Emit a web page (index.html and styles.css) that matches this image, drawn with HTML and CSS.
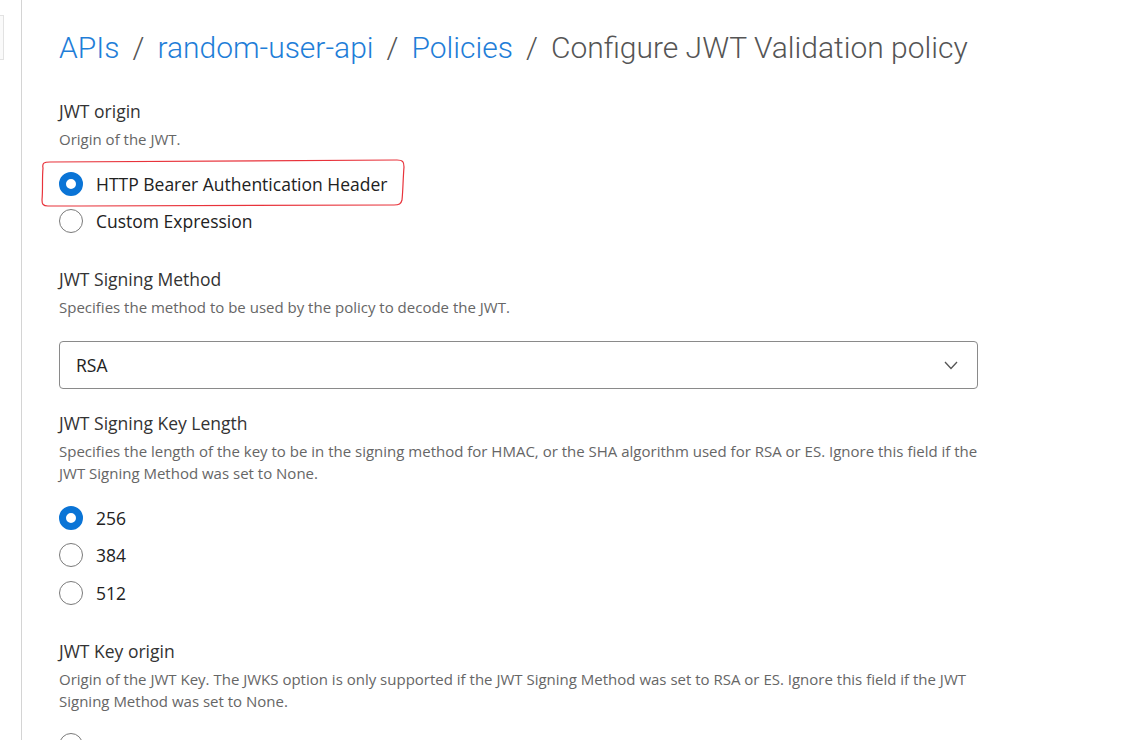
FILE: index.html
```html
<!DOCTYPE html>
<html>
<head>
<meta charset="utf-8">
<link rel="stylesheet" href="styles.css">
</head>
<body>
<div class="page">
  <aside class="sidebar"><div class="side-tab"></div></aside>
  <main class="content">
    <h1 class="crumbs">
      <a class="crumb">APIs</a><span class="sep">/</span><a class="crumb">random-user-api</a><span class="sep">/</span><a class="crumb">Policies</a><span class="sep">/</span><span class="current">Configure JWT Validation policy</span>
    </h1>

    <section class="field first-field">
      <div class="label">JWT origin</div>
      <div class="desc">Origin of the JWT.</div>
      <div class="radios">
        <div class="radio-row">
          <span class="radio checked"></span><span class="radio-text">HTTP Bearer Authentication Header</span>
          <svg class="annotation" width="368" height="50" viewBox="0 0 368 50">
            <path d="M3 9 C 2 4, 4 3, 10 3 L 357 1 C 363 1, 364 3, 364 8 C 363 20, 363 32, 362 41 C 361 45, 359 46, 354 46 L 40 47 L 8 47 C 3 47, 2 45, 2 41 C 3 30, 2 20, 3 9 Z" fill="none" stroke="#e8333b" stroke-width="1.2"/>
          </svg>
        </div>
        <div class="radio-row">
          <span class="radio"></span><span class="radio-text">Custom Expression</span>
        </div>
      </div>
    </section>

    <section class="field">
      <div class="label">JWT Signing Method</div>
      <div class="desc">Specifies the method to be used by the policy to decode the JWT.</div>
      <div class="select">
        <span class="select-value">RSA</span>
        <svg class="chevron" width="14" height="9" viewBox="0 0 14 9"><path d="M1 1 L7 7.5 L13 1" fill="none" stroke="#555" stroke-width="1.3"/></svg>
      </div>
    </section>

    <section class="field after-select">
      <div class="label">JWT Signing Key Length</div>
      <div class="desc">Specifies the length of the key to be in the signing method for HMAC, or the SHA algorithm used for RSA or ES. Ignore this field if the JWT Signing Method was set to None.</div>
      <div class="radios">
        <div class="radio-row"><span class="radio checked"></span><span class="radio-text">256</span></div>
        <div class="radio-row"><span class="radio"></span><span class="radio-text">384</span></div>
        <div class="radio-row"><span class="radio"></span><span class="radio-text">512</span></div>
      </div>
    </section>

    <section class="field">
      <div class="label">JWT Key origin</div>
      <div class="desc">Origin of the JWT Key. The JWKS option is only supported if the JWT Signing Method was set to RSA or ES. Ignore this field if the JWT Signing Method was set to None.</div>
      <div class="radios">
        <div class="radio-row"><span class="radio"></span></div>
      </div>
    </section>
  </main>
</div>
</body>
</html>
```

FILE: styles.css
```css
html, body {
  margin: 0;
  padding: 0;
  background: #ffffff;
  height: 100%;
  overflow: hidden;
}
body {
  font-family: "Open Sans", "Liberation Sans", sans-serif;
  color: #333;
}
.page {
  display: flex;
  min-height: 740px;
}
.sidebar {
  width: 21px;
  border-right: 1px solid #d4d4d4;
  flex-shrink: 0;
  padding-top: 15px;
}
.side-tab {
  width: 3px;
  height: 43px;
  border: 1px solid #e2e2e2;
  border-left: none;
  background: #fafafa;
}
.content {
  padding-left: 37px;
  width: 919px;
}
.crumbs {
  margin: 28px 0 0 0;
  font-family: "Roboto", "DejaVu Sans", sans-serif;
  font-weight: 300;
  font-size: 30px;
  line-height: 40px;
  color: #555;
  white-space: nowrap;
  letter-spacing: 0;
}
.crumb {
  color: #1f7ed8;
}
.sep {
  color: #555;
  margin: 0 13px;
}
.current {
  color: #555;
}
.field {
  margin-top: 26px;
}
.first-field {
  margin-top: 30px;
}
.after-select {
  margin-top: 21px;
}
.label {
  font-size: 17.5px;
  line-height: 26px;
  color: #333;
}
.desc {
  margin-top: 4px;
  font-size: 15px;
  line-height: 22px;
  color: #666;
}
.radios {
  display: flex;
  flex-direction: column;
  margin-top: 15px;
}
.radio-row {
  display: flex;
  align-items: center;
  height: 37.5px;
  position: relative;
}
.radio {
  width: 24px;
  height: 24px;
  border-radius: 50%;
  border: 1.2px solid #7a7a7a;
  box-sizing: border-box;
  background: #fff;
  flex-shrink: 0;
}
.radio.checked {
  border: 7.5px solid #0a74d6;
  background: #fff;
}
.radio-text {
  margin-left: 13px;
  font-size: 17.5px;
  color: #222;
}
.annotation {
  position: absolute;
  left: -19px;
  top: -6px;
  pointer-events: none;
}
.select {
  margin-top: 23px;
  height: 48px;
  box-sizing: border-box;
  border: 1px solid #8a8a8a;
  border-radius: 4px;
  display: flex;
  align-items: center;
  justify-content: space-between;
  padding: 0 19px 0 16px;
}
.select-value {
  font-size: 17.5px;
  color: #222;
}
.chevron {
  display: block;
}
```
